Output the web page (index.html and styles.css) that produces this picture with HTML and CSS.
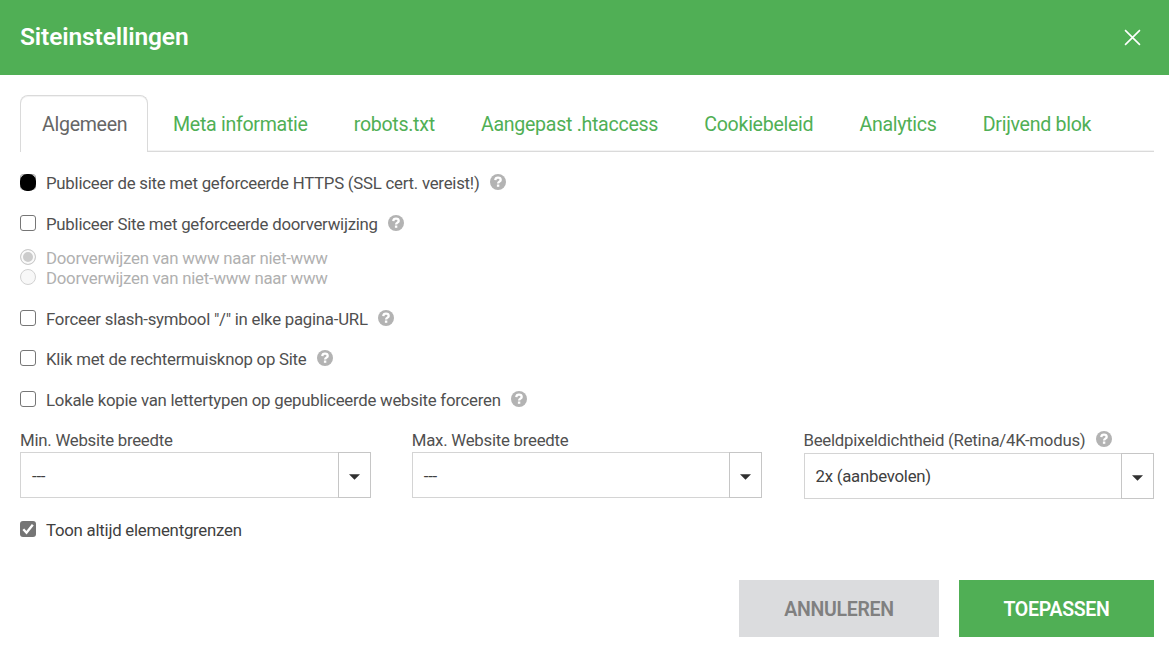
FILE: index.html
```html
<!DOCTYPE html>
<html lang="nl">
<head>
<meta charset="utf-8">
<title>Siteinstellingen</title>
<link rel="stylesheet" href="styles.css">
</head>
<body>
<svg width="0" height="0" class="defs">
  <symbol id="help" viewBox="0 0 16 16">
    <circle cx="8" cy="8" r="8" fill="#b3b3b3"/>
    <path d="M5.3 6.1C5.4 4.400 6.500 3.700 8 3.700c1.600 0 2.700.8 2.700 2.200 0 1.800-2.600 1.700-2.600 3.600" fill="none" stroke="#fff" stroke-width="2.300"/>
    <rect x="6.900" y="10.500" width="2.400" height="2.300" fill="#fff"/>
  </symbol>
</svg>
<div class="dialog">
  <header class="header">
    <h1 class="title">Siteinstellingen</h1>
    <svg class="close" viewBox="0 0 16 16"><path d="M1 1l14 14M15 1L1 15" stroke="#fff" stroke-width="1.500"/></svg>
  </header>
  <main class="content">
    <nav class="tabs">
      <a class="tab active">Algemeen</a>
      <a class="tab">Meta informatie</a>
      <a class="tab">robots.txt</a>
      <a class="tab">Aangepast .htaccess</a>
      <a class="tab">Cookiebeleid</a>
      <a class="tab">Analytics</a>
      <a class="tab">Drijvend blok</a>
    </nav>
    <div class="options">
      <label class="option"><span class="box filled"><span class="dot"></span></span><span>Publiceer de site met geforceerde HTTPS (SSL cert. vereist!)</span><svg class="help"><use href="#help"/></svg></label>
      <label class="option"><span class="box"></span><span>Publiceer Site met geforceerde doorverwijzing</span><svg class="help"><use href="#help"/></svg></label>
      <div class="radios">
        <label class="radio-row"><span class="radio on"></span><span>Doorverwijzen van www naar niet-www</span></label>
        <label class="radio-row"><span class="radio"></span><span>Doorverwijzen van niet-www naar www</span></label>
      </div>
      <label class="option"><span class="box"></span><span>Forceer slash-symbool "/" in elke pagina-URL</span><svg class="help"><use href="#help"/></svg></label>
      <label class="option"><span class="box"></span><span>Klik met de rechtermuisknop op Site</span><svg class="help"><use href="#help"/></svg></label>
      <label class="option"><span class="box"></span><span>Lokale kopie van lettertypen op gepubliceerde website forceren</span><svg class="help"><use href="#help"/></svg></label>
    </div>
    <div class="fields">
      <div class="field">
        <div class="field-label"><span>Min. Website breedte</span></div>
        <div class="select"><span class="value">---</span><span class="arrow"><svg viewBox="0 0 12 6"><path d="M0 0h12L6 6z"/></svg></span></div>
      </div>
      <div class="field">
        <div class="field-label"><span>Max. Website breedte</span></div>
        <div class="select"><span class="value">---</span><span class="arrow"><svg viewBox="0 0 12 6"><path d="M0 0h12L6 6z"/></svg></span></div>
      </div>
      <div class="field density">
        <div class="field-label"><span>Beeldpixeldichtheid (Retina/4K-modus)</span><svg class="help"><use href="#help"/></svg></div>
        <div class="select"><span class="value">2x (aanbevolen)</span><span class="arrow"><svg viewBox="0 0 12 6"><path d="M0 0h12L6 6z"/></svg></span></div>
      </div>
    </div>
    <label class="option last"><span class="box checked"><svg viewBox="0 0 16 16"><path d="M3.300 8.300l3.200 3.400 6.300-7.900" fill="none" stroke="#fff" stroke-width="2.400"/></svg></span><span>Toon altijd elementgrenzen</span></label>
  </main>
  <footer class="footer">
    <button class="btn cancel">ANNULEREN</button>
    <button class="btn apply">TOEPASSEN</button>
  </footer>
</div>
</body>
</html>
```

FILE: styles.css
```css
* { box-sizing: border-box; }
body { margin: 0; background: #fff; font-family: Roboto, "Liberation Sans", sans-serif; font-size: 16.800px; letter-spacing: -0.240px; color: #505050; }
.defs { position: absolute; }
.dialog { width: 1169px; height: 646px; display: flex; flex-direction: column; overflow: hidden; }
.header { height: 75px; flex: none; background: #50af55; display: flex; align-items: center; justify-content: space-between; padding: 0 28px 0 20px; }
.title { margin: 0; font-size: 24.500px; line-height: 28px; font-weight: 600; letter-spacing: -0.120px; color: #fff; padding-bottom: 2px; }
.close { width: 17px; height: 17px; }
.content { padding: 20px 15px 0 20px; }
.tabs { display: flex; height: 57px; box-shadow: inset 0 -1px #dadada, inset 0 -2px #f3f3f3; }
.tab { height: 57px; padding: 0 22px; margin-right: 2.200px; line-height: 59px; font-size: 19.600px; letter-spacing: -0.300px; color: #50af55; white-space: nowrap; }
.tab.active { width: 128px; padding: 0 0 0 21px; line-height: 57px; color: #666; background: #fff; border: 1px solid #dadada; border-bottom: 0; border-radius: 8px 8px 0 0; box-shadow: inset 0 1px #f3f3f3; margin-right: 3px; }
.options { padding-top: 11px; }
.option { display: flex; align-items: center; height: 40.700px; white-space: nowrap; }
.box { width: 16px; height: 16px; flex: none; border: 1.500px solid #767676; border-radius: 3px; margin: -2px 10px 0 0; }
.box.filled { border-color: #aaa; }
.dot { display: block; width: 16px; height: 17px; margin: -1px; border-radius: 7px; background: #000; }
.box.checked { border: 0; background: #757575; }
.box.checked svg { display: block; width: 16px; height: 16px; }
.help { width: 16px; height: 16px; flex: none; margin: -2px 0 0 10.500px; }
.radios { padding: 3px 0 10px; color: #b0b0b0; }
.radio-row { display: flex; align-items: center; height: 20.500px; white-space: nowrap; }
.radio { width: 16px; height: 16px; flex: none; border: 1.500px solid #d2d2d2; border-radius: 50%; background: #f8f8f8; margin: -2px 10px 0 0; }
.radio.on { background: #ccc; border-color: #ccc; box-shadow: inset 0 0 0 2px #fafafa; }
.fields { display: grid; grid-template-columns: repeat(3, 350.500px); column-gap: 41.250px; height: 89px; }
.field-label { display: flex; align-items: center; height: 32px; padding-top: 6.500px; white-space: nowrap; }
.select { height: 46px; border: 1px solid #d4d4d4; display: flex; color: #404040; }
.density .select { margin-top: 1px; }
.value { flex: 1; line-height: 46px; padding-left: 11px; }
.density .value { line-height: 44px; }
.arrow { width: 33px; margin: -1px; height: 46px; border: 1px solid #c6c6c6; display: flex; align-items: center; justify-content: center; }
.arrow svg { width: 11px; height: 6px; fill: #303030; margin-top: 3px; }
.last { color: #404040; }
.footer { margin-top: auto; display: flex; justify-content: flex-end; gap: 20px; padding: 0 15px 9px 0; }
.btn { border: 0; height: 57px; font: 600 19.500px/59px Roboto, "Liberation Sans", sans-serif; letter-spacing: -0.300px; padding: 0; }
.cancel { width: 200px; background: #dbdcde; color: #808080; }
.apply { width: 195px; background: #50af55; color: #fff; }
```
